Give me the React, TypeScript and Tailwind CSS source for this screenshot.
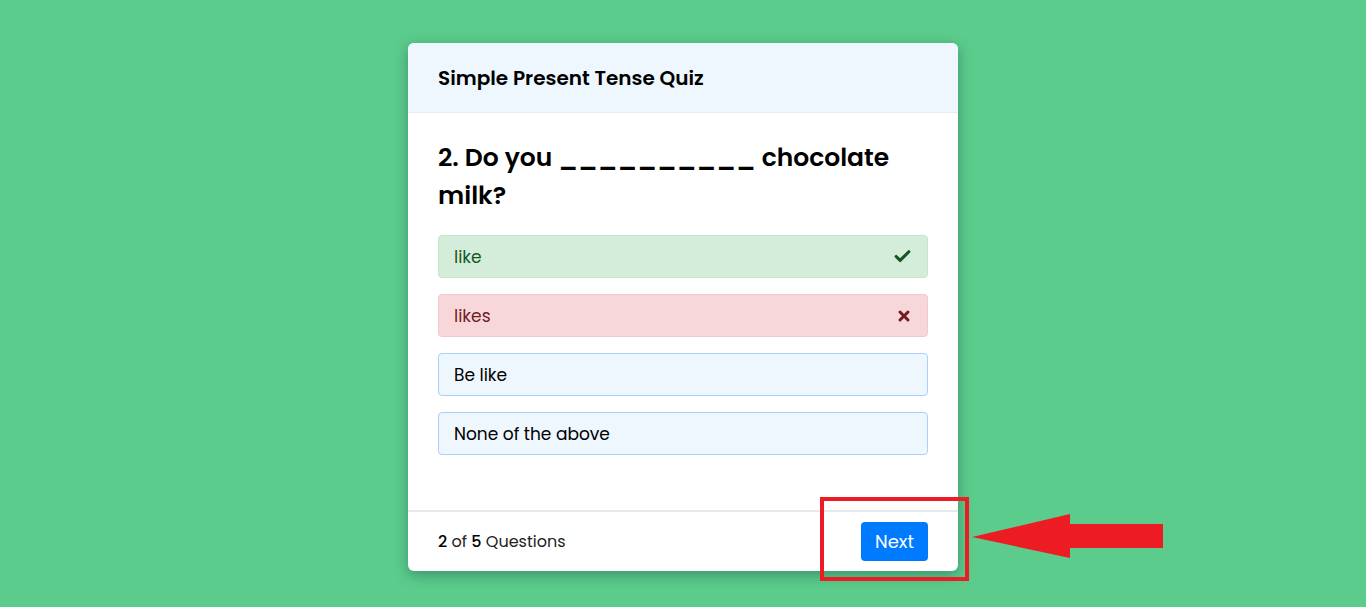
import { Check, X } from "lucide-react"

const options = [
  { text: "like", state: "correct" },
  { text: "likes", state: "wrong" },
  { text: "Be like", state: "idle" },
  { text: "None of the above", state: "idle" },
]

export default function App() {
  return (
    <div
      className="relative min-h-screen bg-[#5bcc8b] flex justify-center pt-[43px]"
      style={{ fontFamily: '"Poppins", "Inter", sans-serif' }}
    >
      <div className="w-[550px] h-[528px] bg-white rounded-md shadow-[0_4px_14px_rgba(0,40,60,0.35)] flex flex-col overflow-hidden">
        <div className="h-[70px] bg-[#eef6fe] border-b border-[#e3ebf3] px-[30px] flex items-center pt-[1px]">
          <h2 className="text-[20px] font-semibold text-black">Simple Present Tense Quiz</h2>
        </div>
        <div className="flex-1 px-[30px] pt-[26px]">
          <h1 className="text-[25px] font-semibold leading-[38px] text-black">
            2. Do you __________ chocolate milk?
          </h1>
          <div className="mt-[20px] flex flex-col gap-[16px]">
            {options.map((o) => (
              <div
                key={o.text}
                className={
                  "h-[43px] rounded border px-[15px] flex items-center justify-between text-[17px] " +
                  (o.state === "correct"
                    ? "bg-[#d4edda] border-[#c3e6cb] text-[#155724]"
                    : o.state === "wrong"
                    ? "bg-[#f8d7da] border-[#f5c6cb] text-[#721c24]"
                    : "bg-[#eef6fe] border-[#a8d2fb] text-black")
                }
              >
                <span className="pt-[2px]">{o.text}</span>
                {o.state === "correct" && <Check className="w-[19px] h-[19px]" strokeWidth={4} />}
                {o.state === "wrong" && <X className="w-[16px] h-[16px]" strokeWidth={4.5} />}
              </div>
            ))}
          </div>
        </div>
        <div className="h-[61px] border-t-2 border-[#e8e8e8] px-[30px] flex items-center justify-between">
          <span className="text-[16px] text-[#222] pt-[1px]">
            <b className="font-medium text-black">2</b> of <b className="font-medium text-black">5</b> Questions
          </span>
          <button className="w-[67px] h-[39px] rounded bg-[#007bff] text-white text-[18px]">Next</button>
        </div>
      </div>

      <div className="absolute left-[820px] top-[497px] w-[149px] h-[84px] border-4 border-[#ed1c24]" />
      <svg className="absolute left-[970px] top-[512px]" width="196" height="48" viewBox="0 0 196 48">
        <polygon points="2,25 100,2 100,12 193,12 193,36 100,36 100,46" fill="#ed1c24" />
      </svg>
    </div>
  )
}
